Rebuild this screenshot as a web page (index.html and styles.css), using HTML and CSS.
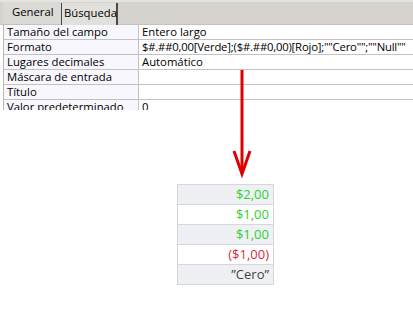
FILE: index.html
```html
<!DOCTYPE html>
<html>
<head lang="es">
    <meta charset="UTF-8">
    <title>Formato</title>
    <link rel="stylesheet" href="styles.css">
</head>
<body>
<!--hoja de propiedades-->
<div class="sheet">
    <div class="tabs">
        <div class="tab on">General</div>
        <div class="tab">Búsqueda</div>
    </div>
    <div class="grid">
        <div class="row"><div class="lbl">Tamaño del campo</div><div class="val">Entero largo</div></div>
        <div class="row"><div class="lbl">Formato</div><div class="val fmt">$#.##0,00[Verde];($#.##0,00)[Rojo];""Cero"";""Null""</div></div>
        <div class="row"><div class="lbl">Lugares decimales</div><div class="val">Automático</div></div>
        <div class="row"><div class="lbl">Máscara de entrada</div><div class="val"></div></div>
        <div class="row"><div class="lbl">Título</div><div class="val"></div></div>
        <div class="row"><div class="lbl">Valor predeterminado</div><div class="val">0</div></div>
    </div>
</div>

<!--flecha-->
<svg class="arrow" width="24" height="110" viewBox="0 0 24 110">
    <line x1="12" y1="0" x2="12" y2="100" stroke="#e00000" stroke-width="3"/>
    <polyline points="4,81 12,104 20,81" fill="none" stroke="#e00000" stroke-width="3" stroke-linejoin="miter"/>
</svg>

<!--resultado-->
<div class="result">
    <div class="cell g">$2,00</div>
    <div class="cell g w">$1,00</div>
    <div class="cell g">$1,00</div>
    <div class="cell r w">($1,00)</div>
    <div class="cell z">”Cero”</div>
</div>
</body>
</html>
```

FILE: styles.css
```css
body {
    margin: 0;
    padding: 0;
    background: #ffffff;
    font-family: "Open Sans", "DejaVu Sans", sans-serif;
    font-size: 11.3px;
    color: #000000;
}
.sheet {
    height: 110px;
    overflow: hidden;
}
.tabs {
    display: flex;
    height: 22px;
    padding: 0 0 0 3px;
    background: #d6d3ce;
    border-top: 2px solid #e6e4e0;
    border-bottom: 1px solid #c4c2bd;
}
.tab {
    height: 22px;
    line-height: 20px;
    padding: 0 3px;
    box-sizing: border-box;
}
.tab.on {
    width: 58px;
    padding-left: 9px;
    background: #dcdad5;
}
.tab:not(.on) {
    width: 57px;
    padding-left: 2px;
    margin-top: 1px;
    border-left: 1px solid #4a4a4a;
    border-right: 2px solid #4a4a4a;
    background: #e2e0dc;
}
.grid {
    margin-left: 3px;
    border-left: 1px solid #b8b8b8;
}
.row {
    display: flex;
    height: 14px;
    line-height: 14px;
    border-bottom: 1px solid #c2c2c2;
}
.lbl {
    width: 131px;
    padding-left: 3px;
    background: #f7f7fd;
    border-right: 1px solid #c2c2c2;
    white-space: nowrap;
}
.val {
    flex: 1;
    padding-left: 3px;
    white-space: nowrap;
}
.val.fmt {
    letter-spacing: -0.2px;
}
.arrow {
    position: absolute;
    left: 230px;
    top: 70px;
}
.result {
    margin: 74px 0 0 177px;
    width: 95px;
    border: 1px solid #d4d7de;
    border-bottom: none;
}
.cell {
    height: 19px;
    line-height: 19px;
    padding-right: 4px;
    text-align: right;
    font-size: 13px;
    background: #eef0f4;
    border-bottom: 1px solid #d4d7de;
}
.cell.w {
    background: #ffffff;
}
.g {
    color: #2fcf2f;
}
.r {
    color: #d42c3c;
}
.z {
    color: #444444;
}
```
